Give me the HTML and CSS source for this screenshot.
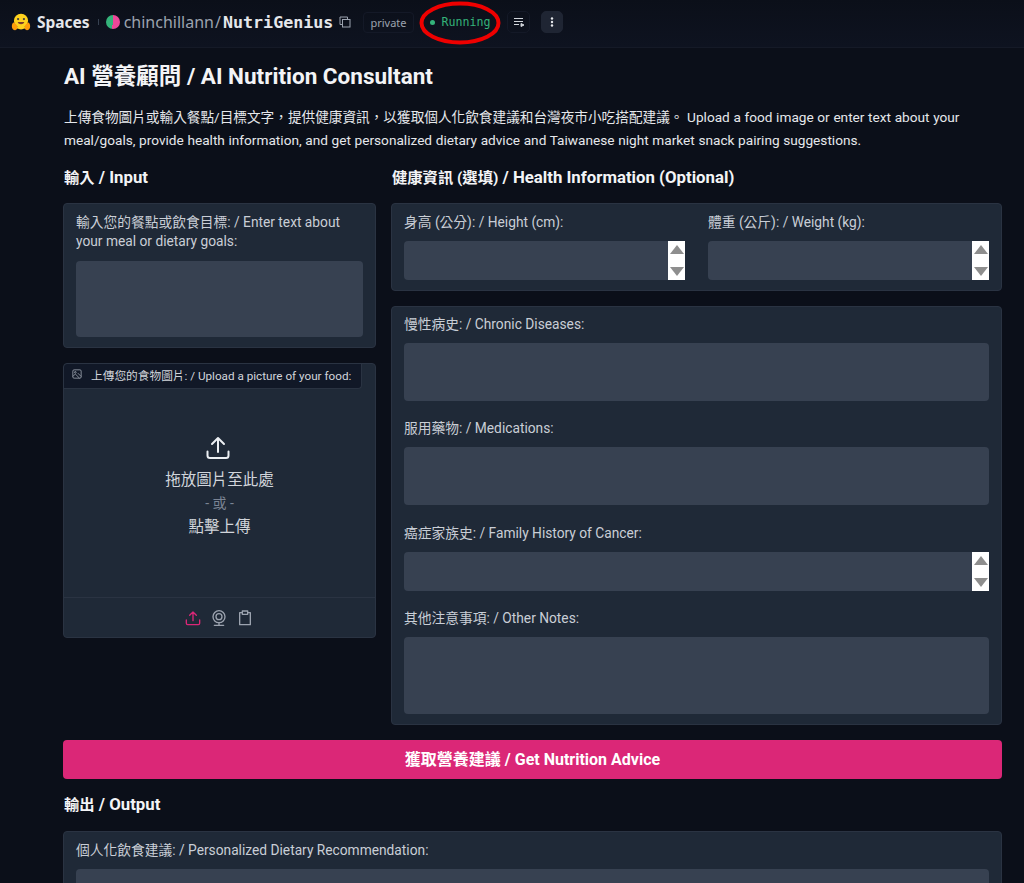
FILE: index.html
```html
<!DOCTYPE html>
<html lang="zh-Hant">
<head>
<meta charset="utf-8">
<title>AI 營養顧問 / AI Nutrition Consultant</title>
<link rel="stylesheet" href="styles.css">
</head>
<body>
<header class="topbar">
  <svg class="hf-logo" viewBox="0 0 24 24" width="20" height="20">
    <circle cx="12" cy="10.500" r="8.500" fill="#ffd21e"/>
    <path d="M1 17c0-3 2-5 3-4l3 3 1 4-3 2c-2 0-4-2-4-5zM23 17c0-3-2-5-3-4l-3 3-1 4 3 2c2 0 4-2 4-5z" fill="#ff9d0b"/>
    <path d="M7 19c3 2.500 7 2.500 10 0l-2-3H9z" fill="#ffd21e"/>
    <circle cx="8.500" cy="8.500" r="1.300" fill="#3a3b45"/>
    <circle cx="15.500" cy="8.500" r="1.300" fill="#3a3b45"/>
    <path d="M8 12c1 3.500 7 3.500 8 0z" fill="#7a3b2e"/>
  </svg>
  <span class="brand">Spaces</span>
  <span class="sep"></span>
  <span class="avatar"></span>
  <span class="owner">chinchillann</span>
  <span class="slash">/</span>
  <span class="repo">NutriGenius</span>
  <svg class="copy" viewBox="0 0 12 12" width="12" height="12" fill="none" stroke="#9ca3af" stroke-width="1">
    <path d="M3.500 8.500H1V1h7.500v2.500"/><rect x="3.500" y="3.500" width="7.500" height="7.500"/>
  </svg>
  <span class="private">private</span>
  <span class="status"><i class="dot"></i>Running</span>
  <span class="icon-btn">
    <svg viewBox="0 0 12 12" width="12" height="12" fill="none" stroke="#d1d5db" stroke-width="1"><path d="M1 2.500h9M1 5.500h9M1 8.500h5"/><path d="M8 7.500l3 1.500-3 1.500z" fill="#d1d5db"/></svg>
  </span>
  <span class="icon-btn icon-btn-solid">
    <svg viewBox="0 0 12 12" width="12" height="12" fill="#e5e7eb"><circle cx="6" cy="2.500" r="1.200"/><circle cx="6" cy="6" r="1.200"/><circle cx="6" cy="9.500" r="1.200"/></svg>
  </span>
  <svg class="ring" viewBox="0 0 84 46" width="84" height="46"><ellipse cx="42" cy="23" rx="38.500" ry="19.500" fill="none" stroke="#ee0000" stroke-width="4"/></svg>
</header>

<main class="page">
  <h1 class="title">AI 營養顧問 / AI Nutrition Consultant</h1>
  <p class="intro">上傳食物圖片或輸入餐點/目標文字，提供健康資訊，以獲取個人化飲食建議和台灣夜市小吃搭配建議。 Upload a food image or enter text about your meal/goals, provide health information, and get personalized dietary advice and Taiwanese night market snack pairing suggestions.</p>

  <div class="columns">
    <section class="col-left">
      <h2 class="heading"><span class="zh">輸入</span> / Input</h2>
      <div class="panel panel-text">
        <div class="label label-two">輸入您的餐點或飲食目標: / Enter text about your meal or dietary goals:</div>
        <div class="field h76"></div>
      </div>
      <div class="panel upload">
        <div class="tab">
          <svg viewBox="0 0 12 12" width="10" height="10" fill="none" stroke="#9ca3af" stroke-width="1"><rect x="1" y="1" width="10" height="10" rx="1.500"/><circle cx="4" cy="4" r="1"/><path d="M1 9l3-3 5 5M7 5l4 4"/></svg>
          <span>上傳您的食物圖片: / Upload a picture of your food:</span>
        </div>
        <div class="drop">
          <svg class="drop-icon" viewBox="0 0 24 24" width="24" height="24" fill="none" stroke="#eceff3" stroke-width="2" stroke-linecap="round" stroke-linejoin="round"><path d="M1.500 15.500v4a2.500 2.500 0 0 0 2.500 2.500h16a2.500 2.500 0 0 0 2.500-2.500v-4"/><path d="M12 16V2M6 8l6-6 6 6"/></svg>
          <div class="drop-line">拖放圖片至此處</div>
          <div class="drop-or">- 或 -</div>
          <div class="drop-line">點擊上傳</div>
        </div>
        <div class="tools">
          <svg viewBox="0 0 24 24" width="16" height="16" fill="none" stroke="#db2777" stroke-width="2" stroke-linecap="round" stroke-linejoin="round"><path d="M2 15v5a2 2 0 0 0 2 2h16a2 2 0 0 0 2-2v-5"/><path d="M12 16V3M7 8l5-5 5 5"/></svg>
          <svg viewBox="0 0 24 24" width="16" height="16" fill="none" stroke="#9ca3af" stroke-width="2" stroke-linecap="round"><circle cx="12" cy="10" r="9"/><circle cx="12" cy="10" r="4.500"/><path d="M5 23h14M12 19v4"/></svg>
          <svg viewBox="0 0 24 24" width="16" height="16" fill="none" stroke="#9ca3af" stroke-width="2" stroke-linejoin="round"><path d="M8 4H4v18h16V4h-4"/><rect x="8" y="1.500" width="8" height="5"/></svg>
        </div>
      </div>
    </section>

    <section class="col-right">
      <h2 class="heading"><span class="zh">健康資訊 (選填)</span> / Health Information (Optional)</h2>
      <div class="panel panel-row">
        <div class="cell">
          <div class="label">身高 (公分): / Height (cm):</div>
          <div class="field h39 spin-field"><span class="spin"><i class="up"></i><i class="down"></i></span></div>
        </div>
        <div class="cell">
          <div class="label">體重 (公斤): / Weight (kg):</div>
          <div class="field h39 spin-field"><span class="spin"><i class="up"></i><i class="down"></i></span></div>
        </div>
      </div>
      <div class="panel panel-stack">
        <div class="label">慢性病史: / Chronic Diseases:</div>
        <div class="field h58"></div>
        <div class="label">服用藥物: / Medications:</div>
        <div class="field h58"></div>
        <div class="label">癌症家族史: / Family History of Cancer:</div>
        <div class="field h39 spin-field"><span class="spin"><i class="up"></i><i class="down"></i></span></div>
        <div class="label">其他注意事項: / Other Notes:</div>
        <div class="field h77"></div>
      </div>
    </section>
  </div>

  <button class="submit" type="button">獲取營養建議 / Get Nutrition Advice</button>

  <h2 class="heading heading-output"><span class="zh">輸出</span> / Output</h2>
  <div class="panel panel-output">
    <div class="label">個人化飲食建議: / Personalized Dietary Recommendation:</div>
    <div class="field h76"></div>
  </div>
</main>
</body>
</html>
```
FILE: styles.css
```css
* { box-sizing: border-box; }
html, body { height: 100%; overflow: hidden; }
body {
  margin: 0;
  background: #0b0f19;
  color: #f3f4f6;
  font-family: Roboto, "Noto Sans CJK TC", sans-serif;
}
.topbar {
  position: relative;
  display: flex;
  align-items: center;
  height: 48px;
  padding: 0 0 3px 11px;
  background: linear-gradient(#0b0f19, #0e1320);
  border-bottom: 1px solid #151a27;
  font-family: "Noto Sans", sans-serif;
}
.brand {
  margin-left: 6px;
  font-size: 15.500px;
  font-weight: 700;
  color: #e5e7eb;
}
.sep { width: 1px; height: 6px; margin: 0 7px 0 8px; background: #374151; }
.avatar {
  width: 14px;
  height: 14px;
  border-radius: 50%;
  background: conic-gradient(#ec4899 0 190deg, #34b37a 190deg 360deg);
}
.owner { margin-left: 4px; font-size: 16px; color: #9ca3af; }
.slash { margin: 0 2px 0 1px; font-size: 16px; color: #9ca3af; }
.repo {
  font-family: "DejaVu Sans Mono", monospace;
  font-size: 16.700px;
  font-weight: 700;
  color: #e5e7eb;
}
.copy { margin-left: 6px; }
.private {
  margin-left: 12px;
  padding: 2px 6px;
  font-size: 11px;
  line-height: 15px;
  color: #9ca3af;
  border: 1px solid #141927;
  border-radius: 4px;
}
.status {
  display: flex;
  align-items: center;
  margin-left: 16px;
  font-family: "DejaVu Sans Mono", monospace;
  font-size: 11.600px;
  color: #34b37a;
}
.dot {
  width: 5px;
  height: 5px;
  margin-right: 7px;
  border-radius: 50%;
  background: #34b37a;
}
.icon-btn {
  display: flex;
  align-items: center;
  justify-content: center;
  width: 23px;
  height: 22px;
  margin-left: 17px;
  border: 1px solid #141927;
  border-radius: 5px;
}
.icon-btn-solid { width: 22px; margin-left: 11px; background: #1f2533; border-color: #1f2533; }
.ring { position: absolute; left: 418px; top: 0; }

.page { width: 939px; margin-left: 63px; padding-top: 16px; }
.title { margin: 0; padding-left: 1px; font-size: 22.500px; line-height: 25px; font-weight: 700; }
.intro {
  margin: 17px 0 0;
  padding-left: 1px;
  font-size: 13.650px;
  word-spacing: 0.250px;
  line-height: 23px;
  color: #e5e7eb;
}
.columns {
  display: grid;
  grid-template-columns: 313px 611px;
  column-gap: 15px;
  margin-top: 15px;
}
.heading { margin: 0 0 15px; padding-left: 1px; font-size: 16.800px; line-height: 20px; font-weight: 700; color: #f3f4f6; }
.zh { font-size: 15.300px; }
.panel {
  background: #1f2937;
  border: 1px solid #2a3342;
  border-radius: 4px;
}
.label { font-size: 13.750px; line-height: 19px; color: #c9ced6; }
.field { background: #374151; border-radius: 4px; }
.h39 { height: 39px; }
.h58 { height: 58px; }
.h76 { height: 76px; }
.h77 { height: 77px; }

.panel-text { height: 145px; padding: 9px 12px; }
.label-two { margin-bottom: 10px; }
.upload {
  display: flex;
  flex-direction: column;
  height: 275px;
  margin-top: 15px;
}
.tab {
  display: flex;
  align-items: center;
  gap: 9px;
  width: 298px;
  height: 25px;
  padding: 0 0 4px 8px;
  font-size: 11.700px;
  color: #d1d5db;
  white-space: nowrap;
  background: #111827;
  border-right: 1px solid #2a3342;
  border-bottom: 1px solid #2a3342;
  border-radius: 4px 0 4px 0;
}
.drop {
  flex: 1;
  display: flex;
  flex-direction: column;
  align-items: center;
  justify-content: center;
  padding: 0 0 12px 0;
}
.drop-icon { margin: 0 3px 8px 0; }
.drop-line { font-size: 15.500px; line-height: 24px; color: #d1d5db; }
.drop-or { font-size: 14px; line-height: 23px; color: #7b8494; }
.tools {
  display: flex;
  justify-content: center;
  gap: 10px;
  height: 40px;
  padding: 12px 2px 0 0;
  border-top: 1px solid #2a3342;
}

.panel-row {
  display: grid;
  grid-template-columns: 281px 281px;
  column-gap: 23px;
  height: 88px;
  padding: 9px 12px;
}
.cell .label { margin-bottom: 9px; }
.spin-field { display: flex; justify-content: flex-end; }
.spin {
  display: flex;
  flex-direction: column;
  justify-content: space-between;
  align-items: center;
  width: 17px;
  height: 100%;
  padding: 4px 0;
  background: #fff;
}
.up, .down { width: 0; height: 0; border-left: 7px solid transparent; border-right: 7px solid transparent; }
.up { border-bottom: 9px solid #8e8e8e; }
.down { border-top: 9px solid #8e8e8e; }

.panel-stack {
  height: 419px;
  margin-top: 15px;
  padding: 8px 12px;
}
.panel-stack .label { margin-bottom: 9px; }
.panel-stack .field { margin-bottom: 18.300px; }

.submit {
  display: block;
  width: 939px;
  height: 39px;
  margin-top: 15px;
  font: 700 16px/20px Roboto, "Noto Sans CJK TC", sans-serif;
  color: #fff;
  background: #db2777;
  border: 0;
  border-radius: 4px;
}
.heading-output { margin-top: 15px; margin-bottom: 16px; }
.panel-output { padding: 9px 12px; }
.panel-output .label { margin-bottom: 9px; }
```
